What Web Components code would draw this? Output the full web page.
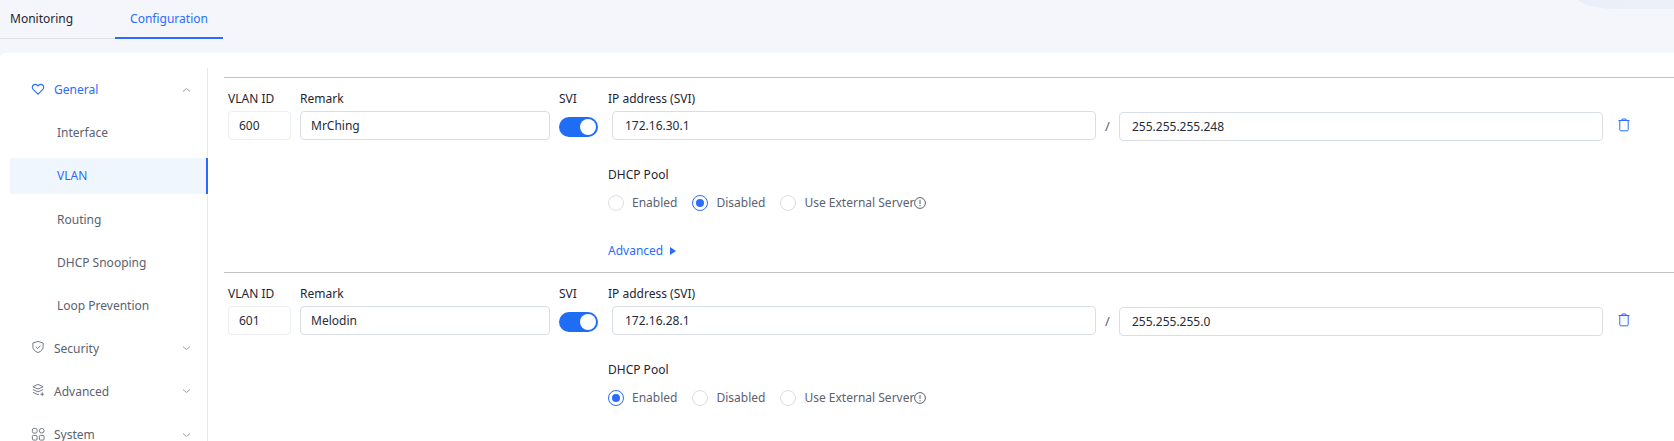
<!DOCTYPE html>
<html>
<head>
<meta charset="utf-8">
<title>VLAN</title>
<style>
  html, body { margin: 0; height: 441px; overflow: hidden; background: #f5f6fb; }
  body { font-family: "Noto Sans", "Noto Sans CJK SC", sans-serif; font-size: 12px; color: #1f2533; }
</style>
</head>
<body>
<app-page>
  <top-tabs slot="tabs"></top-tabs>
  <side-menu slot="menu"></side-menu>
  <vlan-row vid="600" remark="MrChing" ip="172.16.30.1" mask="255.255.255.248" dhcp="disabled" advanced></vlan-row>
  <vlan-row vid="601" remark="Melodin" ip="172.16.28.1" mask="255.255.255.0" dhcp="enabled"></vlan-row>
</app-page>

<script>
const pageTpl = document.createElement('template');
pageTpl.innerHTML = `
<style>
  :host { display: block; height: 441px; position: relative; overflow: hidden; }
  .blob {
    position: absolute; top: -70px; right: -60px; width: 164px; height: 79px;
    border-radius: 0 0 0 45px / 0 0 0 20px;
    background: linear-gradient(90deg, #e9eef9, #edf2f8);
  }
  .panel {
    display: flex; height: 388px; background: #fff;
    border-top-left-radius: 6px;
  }
  .body { flex: 1; min-width: 0; padding: 24px 0 0 16px; }
</style>
<div class="blob"></div>
<slot name="tabs"></slot>
<div class="panel">
  <slot name="menu"></slot>
  <div class="body"><slot></slot></div>
</div>`;

class AppPage extends HTMLElement {
  constructor() {
    super();
    this.attachShadow({ mode: 'open' });
    this.shadowRoot.appendChild(pageTpl.content.cloneNode(true));
  }
}
customElements.define('app-page', AppPage);

const tabsTpl = document.createElement('template');
tabsTpl.innerHTML = `
<style>
  :host { display: flex; height: 53px; position: relative; align-items: flex-start; }
  .tab { line-height: 38px; font-size: 12px; }
  .one { width: 115px; height: 39px; padding-left: 10px; box-sizing: border-box; border-bottom: 1px solid #dfe1e8; color: #1f2533; }
  .two { width: 108px; text-align: center; color: #2b6bff; border-bottom: 2px solid #2b6bff; height: 37px; }
</style>
<div class="tab one">Monitoring</div>
<div class="tab two">Configuration</div>`;

class TopTabs extends HTMLElement {
  constructor() {
    super();
    this.attachShadow({ mode: 'open' });
    this.shadowRoot.appendChild(tabsTpl.content.cloneNode(true));
  }
}
customElements.define('top-tabs', TopTabs);

const ICONS = {
  heart: '<path d="M7.5 13 2.3 7.9a3.1 3.1 0 0 1 0-4.4 3.1 3.1 0 0 1 4.4 0l.8.8.8-.8a3.1 3.1 0 0 1 4.4 0 3.1 3.1 0 0 1 0 4.4z"/>',
  shield: '<path d="M7.5 1.5 2 3.2v4c0 3 2.3 5 5.5 6.3 3.2-1.3 5.5-3.3 5.5-6.3v-4z"/><path d="m5 7.3 2 2 3.2-3.3"/>',
  layers: '<path d="M7.5 1.5 2 4l5.5 2.500L13 4z"/><path d="m2 7 5.500 2.500L13 7"/><path d="m2 10 5.500 2.500 1-.5"/><path d="M12 10v4M10 12h4"/>',
  grid: '<rect x="1.500" y="1.500" width="5" height="5" rx="1.500"/><rect x="9" y="1.500" width="5" height="5" rx="2.500"/><rect x="1.500" y="9" width="5" height="5" rx="1"/><rect x="9" y="9" width="5" height="5" rx="1"/>'
};

const menuTpl = document.createElement('template');
menuTpl.innerHTML = `
<style>
  :host { display: block; width: 208px; flex: none; box-sizing: border-box; padding: 15px 0 0 10px; }
  .wrap { border-right: 1px solid #e6e7ea; height: 373px; width: 198px; box-sizing: border-box; }
  .item { height: 43.300px; display: flex; align-items: center; font-size: 12px; color: #5b6170; }
  .group { padding-left: 21px; gap: 8px; }
  .group svg.ic { width: 14px; height: 14px; margin: -2px 1px 0 0; fill: none; stroke: #6c717e; stroke-width: 1; flex: none; }
  .group span { flex: 1; }
  .group svg.ch { width: 9px; height: 6px; fill: none; stroke: #9a9ea8; stroke-width: 1; margin-right: 16px; }
  .group.on { color: #2b6bff; }
  .group.on svg.ic { stroke: #2b6bff; stroke-width: 1.200; }
  .sub { padding-left: 47px; }
  .sub.on { height: 36px; margin: 3px -1px 4px 0; background: #f0f6fe; color: #2b6bff; border-right: 2px solid #2b6bff; box-sizing: border-box; }
  .lift { margin-top: -1px; }
</style>
<div class="wrap">
  <div class="item group on"><svg class="ic" viewBox="0 0 15 15">${ICONS.heart}</svg><span>General</span><svg class="ch" viewBox="0 0 9 6"><path d="m1 4.500 3.500-3 3.500 3"/></svg></div>
  <div class="item sub">Interface</div>
  <div class="item sub on">VLAN</div>
  <div class="item sub">Routing</div>
  <div class="item sub">DHCP Snooping</div>
  <div class="item sub">Loop Prevention</div>
  <div class="item group lift"><svg class="ic" viewBox="0 0 15 15">${ICONS.shield}</svg><span>Security</span><svg class="ch" viewBox="0 0 9 6"><path d="m1 1.500 3.500 3 3.500-3"/></svg></div>
  <div class="item group"><svg class="ic" viewBox="0 0 15 15">${ICONS.layers}</svg><span>Advanced</span><svg class="ch" viewBox="0 0 9 6"><path d="m1 1.500 3.500 3 3.500-3"/></svg></div>
  <div class="item group"><svg class="ic" viewBox="0 0 15 15">${ICONS.grid}</svg><span>System</span><svg class="ch" viewBox="0 0 9 6"><path d="m1 1.500 3.500 3 3.500-3"/></svg></div>
</div>`;

class SideMenu extends HTMLElement {
  constructor() {
    super();
    this.attachShadow({ mode: 'open' });
    this.shadowRoot.appendChild(menuTpl.content.cloneNode(true));
  }
}
customElements.define('side-menu', SideMenu);

const radioTpl = document.createElement('template');
radioTpl.innerHTML = `
<style>
  :host { display: inline-flex; align-items: center; gap: 8px; color: #5b6170; font-size: 12px; }
  .dot { width: 14px; height: 14px; border-radius: 50%; border: 1px solid #dcdee4; background: #fff; position: relative; }
  :host([checked]) .dot { border-color: #2b6bff; }
  :host([checked]) .dot::after {
    content: ""; position: absolute; inset: 3px; border-radius: 50%; background: #2b6bff;
  }
</style>
<span class="dot"></span><span><slot></slot></span>`;

class RadioItem extends HTMLElement {
  constructor() {
    super();
    this.attachShadow({ mode: 'open' });
    this.shadowRoot.appendChild(radioTpl.content.cloneNode(true));
  }
}
customElements.define('radio-item', RadioItem);

const rowTpl = document.createElement('template');
rowTpl.innerHTML = `
<style>
  :host { display: block; height: 194px; border-top: 1px solid #c2c3c6; font-size: 12px; color: #1f2533; }
  .top { display: flex; align-items: flex-start; padding: 5px 0 0 4px; }
  label { display: block; height: 28px; line-height: 31px; }
  .box {
    height: 29px; box-sizing: border-box; border: 1px solid #d9dde8; border-radius: 4px;
    padding: 0 10px; line-height: 27px; background: #fff; color: #262c3a;
  }
  .vid { width: 72px; }
  .vid .box { width: 63px; border-color: #eceef2; }
  .rem { width: 259px; }
  .rem .box { width: 250px; }
  .svi { width: 53px; }
  .sw { display: block; width: 39px; height: 20px; margin-top: 6px; border-radius: 10px; background: #1f6cf5; position: relative; }
  .sw::after { content: ""; position: absolute; right: 2px; top: 2px; width: 16px; height: 16px; border-radius: 50%; background: #fff; }
  .ip { width: 484px; }
  .ip label { margin-left: -4px; }
  .ip .box { width: 484px; padding-left: 12px; }
  .slash { width: 23px; text-align: center; padding-top: 34px; color: #5b6170; font-size: 13px; }
  .mask { width: 484px; padding-top: 29px; }
  .mask .box { width: 484px; padding-left: 12px; }
  .del { width: 16px; height: 16px; margin: 34px 0 0 13px; fill: none; stroke: #2b6bff; stroke-width: 1; }
  .lower { padding: 19px 0 0 384px; }
  .lower .lab { height: 28px; line-height: 29px; }
  .radios { display: flex; align-items: center; gap: 15px; height: 29px; }
  .info { width: 12px; height: 12px; vertical-align: -2px; fill: none; stroke: #5b6170; }
  .adv { margin-top: 19px; height: 29px; line-height: 29px; color: #2b6bff; display: flex; align-items: center; gap: 7px; }
  .adv svg { width: 6px; height: 8px; fill: #2b6bff; }
</style>
<div class="top">
  <div class="vid"><label>VLAN ID</label><div class="box" id="vid"></div></div>
  <div class="rem"><label>Remark</label><div class="box" id="rem"></div></div>
  <div class="svi"><label>SVI</label><span class="sw"></span></div>
  <div class="ip"><label>IP address (SVI)</label><div class="box" id="ip"></div></div>
  <div class="slash">/</div>
  <div class="mask"><div class="box" id="mask"></div></div>
  <svg class="del" viewBox="0 0 16 16"><path d="M2.500 3.500h11M6 3.500V2h4v1.500M3.800 3.500v9.300c0 .6.400 1 1 1h6.400c.6 0 1-.4 1-1V3.500"/></svg>
</div>
<div class="lower">
  <div class="lab">DHCP Pool</div>
  <div class="radios">
    <radio-item id="r-en">Enabled</radio-item>
    <radio-item id="r-dis">Disabled</radio-item>
    <radio-item>Use External Server<svg class="info" viewBox="0 0 12 12"><circle cx="6" cy="6" r="5.400"/><path d="M6 3v4M6 8v1.200"/></svg></radio-item>
  </div>
  <div class="adv" id="adv">Advanced <svg viewBox="0 0 6 8"><path d="M0 0l6 4-6 4z"/></svg></div>
</div>`;

class VlanRow extends HTMLElement {
  constructor() {
    super();
    this.attachShadow({ mode: 'open' });
    this.shadowRoot.appendChild(rowTpl.content.cloneNode(true));
  }

  connectedCallback() {
    const root = this.shadowRoot;
    root.querySelector('#vid').textContent = this.getAttribute('vid');
    root.querySelector('#rem').textContent = this.getAttribute('remark');
    root.querySelector('#ip').textContent = this.getAttribute('ip');
    root.querySelector('#mask').textContent = this.getAttribute('mask');
    const on = this.getAttribute('dhcp') === 'enabled' ? '#r-en' : '#r-dis';
    root.querySelector(on).setAttribute('checked', '');
    if (!this.hasAttribute('advanced')) root.querySelector('#adv').remove();
  }
}
customElements.define('vlan-row', VlanRow);
</script>
</body>
</html>
